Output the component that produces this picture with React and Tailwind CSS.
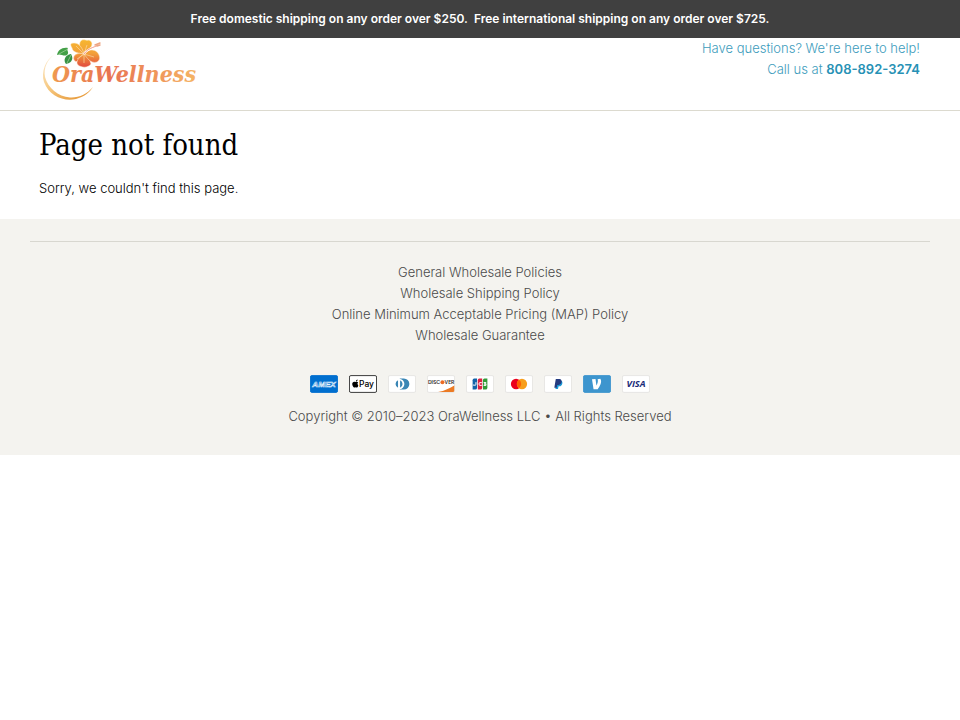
import React from 'react';

const footerLinks = [
  'General Wholesale Policies',
  'Wholesale Shipping Policy',
  'Online Minimum Acceptable Pricing (MAP) Policy',
  'Wholesale Guarantee',
];

const Logo = () => (
  <svg viewBox="0 0 156 64" className="w-[156px] h-16" role="img" aria-label="OraWellness">
    <defs>
      <linearGradient id="word" x1="0" y1="0" x2="1" y2="0">
        <stop offset="0" stopColor="#ef9a50" />
        <stop offset="0.4" stopColor="#e87352" />
        <stop offset="1" stopColor="#f5b464" />
      </linearGradient>
      <linearGradient id="ring" x1="0" y1="0" x2="0.6" y2="1">
        <stop offset="0" stopColor="#fdf0da" />
        <stop offset="0.6" stopColor="#f6c982" />
        <stop offset="1" stopColor="#e9a043" />
      </linearGradient>
      <linearGradient id="petal" x1="0" y1="0" x2="0" y2="28" gradientUnits="userSpaceOnUse">
        <stop offset="0" stopColor="#f7b92e" />
        <stop offset="0.55" stopColor="#f2a03a" />
        <stop offset="1" stopColor="#e3503f" />
      </linearGradient>
    </defs>
    <path d="M15 16C5 22 1 34 4 44C9 58 24 64 36 61C44 59 50 54 53 49C47 56 39 60 30 59.5C18 58.5 8 50 5 39C3.500 30 7 22 15 16Z" fill="url(#ring)" />
    {/* leaves */}
    <path d="M17 17C18 12 22 9 28 10C26 13 30 14 27 17C24 19 20 15 17 17Z" fill="#43a047" />
    <path d="M26 26C23 22 25 17 31 16C33 19 33 23 29 25C27 26 28 25 26 26Z" fill="#379244" />
    <path d="M19 16L28 11M27 25L31 17" stroke="#b8dcae" strokeWidth="0.6" />
    {/* flower */}
    <g fill="url(#petal)" stroke="#fdebd2" strokeWidth="0.5">
      <path d="M44 16C39 13 38 4 42 2C45 1 46 3 49 2C54 4 53 10 44 16Z" />
      <path d="M44 16C42 8 38 5 34 5C29 5 31 8 32 10C33 15 39 15 44 16Z" />
      <path d="M44 16C38 14 32 17 34 22C36 25 40 24 44 16Z" />
      <path d="M44 16C39 19 35 24 38 27C42 30 48 30 51 26C50 21 47 18 44 16Z" />
      <path d="M44 16C48 11 54 11 57 14C60 17 61 22 57 24C51 26 47 20 44 16Z" />
    </g>
    <path d="M44 16L47 7M44 16L36 8M44 16L37 21M44 16L44 25M44 16L54 19" stroke="#fbd79d" strokeWidth="0.7" />
    <path d="M44 16C48 10 53 10 58 7" stroke="#fff" strokeWidth="2" fill="none" />
    <path d="M44 16C48 10 53 10 58 7" stroke="#ef8168" strokeWidth="0.8" fill="none" />
    <path d="M55 7L60 5M57 8L60 7" stroke="#eda583" strokeWidth="1.5" strokeLinecap="round" />
    <text x="12" y="44" fontStyle="italic" fontWeight="bold" fontSize="23" fill="url(#word)" className="font-['DejaVu_Serif_Condensed','DejaVu_Serif',serif]">
      OraWellness
    </text>
  </svg>
);

const Card = ({ label, fill = '#fff', stroke = '#e4e3e0', children }) => (
  <li>
    <svg viewBox="0 0 38 24" className="w-7 h-[18px]" role="img" aria-label={label}>
      <rect x="0.6" y="0.6" width="36.8" height="22.8" rx="2" fill={fill} stroke={stroke} strokeWidth="1.2" />
      {children}
    </svg>
  </li>
);

const PaymentIcons = () => (
  <ul className="flex justify-center gap-[11px]">
    <Card label="American Express" fill="#006fcf" stroke="#006fcf">
      <text x="19" y="16" textAnchor="middle" fontFamily="Liberation Sans, sans-serif" fontWeight="bold" fontStyle="italic" fontSize="11" fill="#006fcf" stroke="#e6f1fb" strokeWidth="0.8">AMEX</text>
    </Card>
    <Card label="Apple Pay" stroke="#222">
      <path d="M10.6 8.2C11.4 7.5 11.8 6.8 11.7 5.9C10.6 6 9.5 7 9.6 8.2ZM12.6 13.6C11.2 12.8 11.2 10.8 12.5 10C11.6 8.7 10.2 8.7 9.4 9.1C8.7 9.3 8.3 9.1 7.7 8.9C5.9 8.5 4.4 9.8 4.4 12C4.4 14.1 5.9 16.7 7.2 16.8C7.9 16.8 8.4 16.3 9.1 16.3C9.8 16.3 10.2 16.8 10.9 16.8C11.8 16.6 12.4 15 12.6 13.6Z" fill="#000" />
      <text x="13.6" y="16.6" fontFamily="Inter, sans-serif" fontWeight="500" fontSize="11.5" fill="#000">Pay</text>
    </Card>
    <Card label="Diners Club">
      <path d="M16 4.5H21.5A7.5 7.5 0 0 1 21.5 19.5H16Z" fill="#3a86b5" />
      <circle cx="15.2" cy="12" r="7" fill="#fff" />
      <path d="M13.6 7A5.4 5.4 0 0 0 13.6 17ZM16.4 7A5.4 5.4 0 0 1 16.4 17Z" fill="#3a86b5" />
    </Card>
    <Card label="Discover">
      <path d="M37 14V21Q37 23 35 23H15C24 21 31 18 37 14Z" fill="#ec7b24" />
      <text x="1.2" y="12.2" fontFamily="Inter, sans-serif" fontWeight="600" fontSize="7" fill="#332d2b">DISC</text>
      <text x="37" y="12.2" textAnchor="end" fontFamily="Inter, sans-serif" fontWeight="600" fontSize="6.6" fill="#332d2b">VER</text>
      <circle cx="20.9" cy="9.7" r="2.7" fill="#ec6b24" />
    </Card>
    <Card label="JCB">
      <path d="M11 4.5H15V17Q15 19.5 12.5 19.5H9V7Q9 4.5 11 4.5Z" fill="#1263a8" />
      <path d="M18 4.5H22V17Q22 19.5 19.5 19.5H16V7Q16 4.5 18 4.5Z" fill="#dc2142" />
      <path d="M25 4.5H29V17Q29 19.5 26.5 19.5H23V7Q23 4.5 25 4.5Z" fill="#339b38" />
      <path d="M13.5 9.5V13Q13.5 14.2 9.5 13.4M21.5 10.2Q17.5 9 17.5 12Q17.5 15 21.5 13.8M24 10H27Q28 11.7 24.5 12Q29 12.2 27 14H24" stroke="#fff" strokeWidth="1.3" fill="none" />
    </Card>
    <Card label="Mastercard">
      <circle cx="15" cy="12" r="7" fill="#eb001b" />
      <circle cx="23" cy="12" r="7" fill="#f79e1b" />
      <path d="M19 6.3A7 7 0 0 1 19 17.7A7 7 0 0 1 19 6.3Z" fill="#ff5f00" />
    </Card>
    <Card label="PayPal">
      <path d="M17 7.5H23C26.5 8 25 15 21 15.2H19.8L19 18.8H15.5Z" fill="#179bd7" />
      <path d="M16 5.2H21C25.6 5.6 24.6 13 20 13.2H18L17.2 17H14Z" fill="#253b80" />
    </Card>
    <Card label="Venmo" fill="#3d95ce" stroke="#3d95ce">
      <path d="M23.5 4.8C26.5 9.5 22.5 15.2 20 19H14.3L12.2 5.6L17 5.1L18.2 14.2C19.5 12 21 8.5 19.8 5.7Z" fill="#fff" />
    </Card>
    <Card label="Visa">
      <text x="19" y="16.4" textAnchor="middle" fontFamily="Open Sans, sans-serif" fontWeight="bold" fontStyle="italic" fontSize="12.5" fill="#1a2b78">VISA</text>
    </Card>
  </ul>
);

const App = () => {
  return (
    <div className="min-h-screen bg-white font-['Inter',sans-serif] text-[13px] font-light leading-[21px] text-black">
      <div className="bg-[#404040] px-4 py-2 text-center text-xs font-semibold leading-[22px] text-white">
        Free domestic shipping on any order over $250.&nbsp; Free international shipping on any order over $725.
      </div>

      <header className="flex items-start justify-between border-b border-[#dcdacf] px-10 pb-2">
        <a href="#"><Logo /></a>
        <div className="text-right text-[#3d9cbc]">
          <p>Have questions? We're here to help!</p>
          <p>
            Call us at <a href="tel:808-892-3274" className="font-semibold text-[#2791b5]">808-892-3274</a>
          </p>
        </div>
      </header>

      <main className="px-[39px] pt-4 pb-5">
        <h1 className="mb-[15px] font-['DejaVu_Serif_Condensed','DejaVu_Serif',serif] text-[29px] font-normal leading-9">Page not found</h1>
        <p>Sorry, we couldn't find this page.</p>
      </main>

      <footer className="bg-[#f4f3ef] px-[30px] pt-[22px] pb-7 text-center text-[#4a4a4a]">
        <hr className="mb-5 border-[#d8d7d0]" />
        <ul className="mb-[29px]">
          {footerLinks.map(link => (
            <li key={link}><a href="#">{link}</a></li>
          ))}
        </ul>
        <PaymentIcons />
        <p className="mt-[13px]">Copyright © 2010–2023 OraWellness LLC • All Rights Reserved</p>
      </footer>
    </div>
  );
};

export default App;
